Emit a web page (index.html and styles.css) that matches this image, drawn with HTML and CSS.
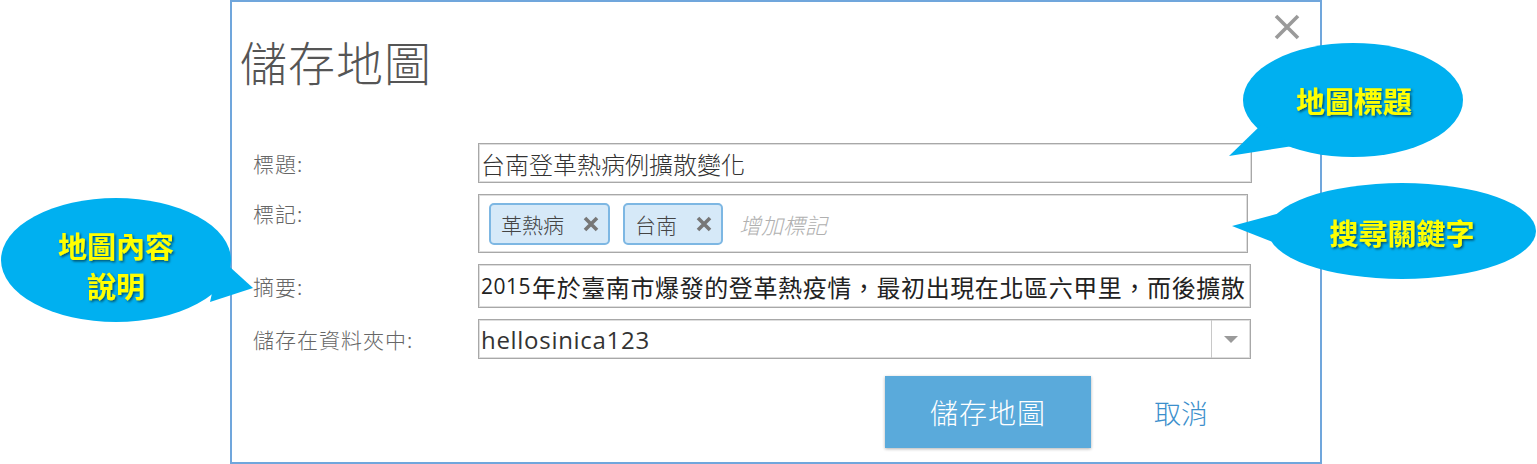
FILE: index.html
```html
<!DOCTYPE html>
<html lang="zh-Hant">
<head>
<meta charset="utf-8">
<title>儲存地圖</title>
<link rel="stylesheet" href="styles.css">
</head>
<body>
<div class="stage">
  <div class="dialog">
    <header class="dlg-head">
      <h1 class="dlg-title">儲存地圖</h1>
      <button class="close" type="button" aria-label="關閉">
        <svg width="26" height="26" viewBox="0 0 26 26"><path d="M2 2 L24 24 M24 2 L2 24" stroke="#9a9a9a" stroke-width="3.6" stroke-linecap="butt"/></svg>
      </button>
    </header>
    <div class="form">
      <div class="lbl">標題:</div>
      <div class="field title-field">台南登革熱病例擴散變化</div>

      <div class="lbl lbl-top">標記:</div>
      <div class="field tags">
        <span class="chip">革熱病<svg class="chip-x" width="18" height="18" viewBox="0 0 18 18"><path d="M3 3 L15 15 M15 3 L3 15" stroke="#777" stroke-width="3.6"/></svg></span>
        <span class="chip">台南<svg class="chip-x" width="18" height="18" viewBox="0 0 18 18"><path d="M3 3 L15 15 M15 3 L3 15" stroke="#777" stroke-width="3.6"/></svg></span>
        <span class="ph">增加標記</span>
      </div>

      <div class="lbl">摘要:</div>
      <div class="field summary"><span class="num">2015</span>年於臺南市爆發的登革熱疫情，最初出現在北區六甲里，而後擴散</div>

      <div class="lbl">儲存在資料夾中:</div>
      <div class="field select">
        <span class="sel-val">hellosinica123</span>
        <span class="sel-btn"><svg width="14" height="8" viewBox="0 0 14 8"><path d="M0 0 H14 L7 7 Z" fill="#9a9a9a"/></svg></span>
      </div>
    </div>
    <div class="actions">
      <button class="btn-primary" type="button">儲存地圖</button>
      <button class="btn-link" type="button">取消</button>
    </div>
  </div>

  <svg class="callouts" width="1537" height="464" viewBox="0 0 1537 464">
    <defs>
      <filter id="ts" x="-10%" y="-20%" width="130%" height="150%">
        <feDropShadow dx="1.5" dy="1.5" stdDeviation="1" flood-color="#000" flood-opacity="0.55"/>
      </filter>
    </defs>
    <g fill="#00b0f0">
      <ellipse cx="1353" cy="100" rx="110" ry="57"/>
      <polygon points="1229,156 1262,124 1293,146"/>
      <ellipse cx="1402" cy="231" rx="134" ry="48"/>
      <polygon points="1232,226 1280,213 1278,244"/>
      <ellipse cx="116" cy="260" rx="115" ry="62"/>
      <polygon points="253,288 220,258 210,302"/>
    </g>
    <g class="co-text" fill="#ffff00" filter="url(#ts)" text-anchor="middle">
      <text x="1354" y="113">地圖標題</text>
      <text x="1402" y="245">搜尋關鍵字</text>
      <text x="116" y="258">地圖內容</text>
      <text x="116" y="298">說明</text>
    </g>
  </svg>
</div>
</body>
</html>
```

FILE: styles.css
```css
* { box-sizing: border-box; }
html, body { margin: 0; padding: 0; background: #fff; }
body {
  font-family: "Noto Sans CJK TC", "Noto Sans", sans-serif;
  width: 1537px;
  height: 464px;
  overflow: hidden;
}
.stage {
  position: relative;
  width: 1537px;
  height: 464px;
}
.dialog {
  margin-left: 230px;
  width: 1092px;
  height: 464px;
  border: 2px solid #70a6dc;
  background: #fff;
  padding-top: 35px;
  display: flex;
  flex-direction: column;
}
.dlg-head {
  display: flex;
  justify-content: space-between;
  align-items: flex-start;
  height: 48px;
}
.dlg-title {
  margin: 0 0 0 8px;
  font-size: 47px;
  line-height: 48px;
  font-weight: 300;
  color: #555;
  letter-spacing: 1px;
}
.close {
  margin: -23px 20px 0 0;
  padding: 0;
  border: 0;
  background: none;
  width: 26px;
  height: 26px;
  display: flex;
}
.form {
  margin-top: 58px;
  padding-left: 21px;
  display: grid;
  grid-template-columns: 225px 774px;
  grid-template-rows: 40px 59px 44px 40px;
  row-gap: 11px;
}
.lbl {
  font-size: 21px;
  line-height: 40px;
  color: #666;
  align-self: center;
  font-weight: 300;
  letter-spacing: 1px;
}
.lbl-top { align-self: start; line-height: 38px; }
.field {
  border: 1px solid #a8a8a8;
  box-shadow: inset 0 0 0 1px #dedede;
  background: #fff;
  display: flex;
  align-items: center;
  overflow: hidden;
  white-space: nowrap;
}
.title-field {
  padding-left: 2px;
  font-size: 24px;
  color: #333;
  font-weight: 300;
}
.tags {
  width: 770px;
  padding-left: 10px;
  gap: 13px;
}
.chip {
  display: flex;
  align-items: center;
  height: 42px;
  padding: 0 8px 0 10px;
  background: #d6e9f8;
  border: 2px solid #7db7e3;
  border-radius: 5px;
  font-size: 21px;
  color: #444;
  font-weight: 300;
  gap: 18px;
}
.chip-x { display: block; }
.ph {
  margin-left: 3px;
  font-size: 22px;
  font-style: italic;
  color: #b0b0b0;
  font-weight: 300;
}
.summary {
  width: 773px;
  padding-left: 2px;
  font-size: 24px;
  letter-spacing: 0.6px;
  color: #222;
}
.num {
  font-family: "Open Sans", sans-serif;
  font-size: 21px;
  letter-spacing: 0.5px;
  margin-right: 1px;
}
.select {
  width: 773px;
  justify-content: space-between;
}
.sel-val {
  padding-left: 2px;
  font-family: "Open Sans", "Noto Sans CJK TC", sans-serif;
  font-size: 24px;
  letter-spacing: 0.7px;
  color: #333;
}
.sel-btn {
  width: 39px;
  height: 100%;
  border-left: 1px solid #c8c8c8;
  display: flex;
  align-items: center;
  justify-content: center;
}
.sel-btn svg { display: block; margin-top: 1px; }
.actions {
  margin-top: 17px;
  display: flex;
  justify-content: flex-end;
  padding-right: 94px;
  align-items: center;
}
.btn-primary {
  width: 206px;
  height: 72px;
  border: 0;
  background: #5aaadb;
  color: #fff;
  font-family: "Noto Sans CJK TC", sans-serif;
  font-size: 28px;
  font-weight: 300;
  box-shadow: 0 1px 3px rgba(0,0,0,0.3);
  letter-spacing: 1px;
}
.btn-link {
  width: 90px;
  height: 72px;
  margin-left: 45px;
  border: 0;
  background: none;
  color: #3b8fcc;
  font-family: "Noto Sans CJK TC", sans-serif;
  font-size: 27px;
  font-weight: 300;
  padding: 0;
}
.callouts {
  position: absolute;
  left: 0;
  top: 0;
  pointer-events: none;
}
.co-text {
  font-family: "Noto Sans CJK TC", sans-serif;
  font-size: 29px;
  font-weight: 700;
}
```
